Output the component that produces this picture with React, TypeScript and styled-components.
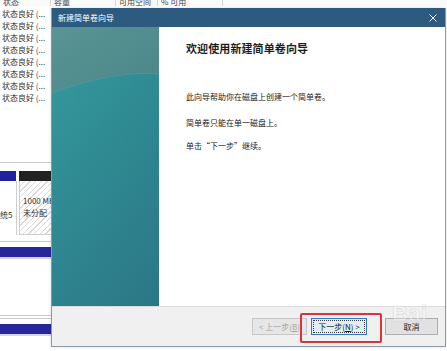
import React from "react";
import styled, { createGlobalStyle } from "styled-components";

const Global = createGlobalStyle`
  html, body { margin: 0; padding: 0; background: #ffffff; }
  body { font-family: "Noto Sans CJK SC", "Noto Sans", sans-serif; }
`;

const Screen = styled.div`
  position: relative;
  width: 447px;
  height: 351px;
  overflow: hidden;
  background: #ffffff;
  font-family: "Noto Sans CJK SC", "Noto Sans", sans-serif;
`;

/* ---------- background window (disk management) ---------- */
const BgWindow = styled.div`
  display: flex;
  flex-direction: column;
`;

const HeaderRow = styled.div`
  display: flex;
  height: 6px;
  background: #fafafa;
`;

const HeaderCell = styled.div<{ $w: number }>`
  width: ${(p) => p.$w}px;
  flex: none;
  height: 6px;
  overflow: hidden;
  display: flex;
  align-items: flex-end;
  border-right: 1px solid #d6d6d6;
  box-sizing: border-box;
  padding-left: 3px;
  font-size: 8px;
  line-height: 8px;
  color: #444;
`;

const HeaderText = styled.span`
  display: block;
  white-space: nowrap;
  line-height: 8px;
`;

const StatusList = styled.div`
  margin-top: 2px;
  width: 51px;
  display: flex;
  flex-direction: column;
`;

const StatusRow = styled.div`
  height: 12px;
  line-height: 12px;
  font-size: 8px;
  color: #333;
  padding-left: 2px;
  white-space: nowrap;
`;

const DiskArea = styled.div`
  width: 51px;
  margin-top: 58px;
  display: flex;
  flex-direction: column;
`;

const GreyLine = styled.div<{ $mt?: number }>`
  height: 1px;
  background: #c9c9c9;
  margin-top: ${(p) => p.$mt ?? 0}px;
`;

const BarRow = styled.div`
  display: flex;
  height: 10px;
  margin-top: 8px;
`;

const Bar = styled.div<{ $w: number; $c: string; $ml?: number }>`
  width: ${(p) => p.$w}px;
  flex: none;
  background: ${(p) => p.$c};
  margin-left: ${(p) => p.$ml ?? 0}px;
`;

const CellRow = styled.div`
  display: flex;
  height: 54px;
`;

const PlainCell = styled.div`
  width: 17px;
  flex: none;
  border-right: 1px solid #cfcfcf;
  box-sizing: border-box;
  display: flex;
  flex-direction: column;
  justify-content: flex-end;
  padding-bottom: 15px;
  overflow: hidden;
  font-size: 8px;
  line-height: 11px;
  color: #333;
`;

const HatchCell = styled.div`
  margin-left: 2px;
  flex: 1;
  border-left: 1px solid #cfcfcf;
  border-bottom: 1px solid #cfcfcf;
  background: repeating-linear-gradient(
    135deg,
    #ffffff 0px,
    #ffffff 3px,
    #d9d9d9 3px,
    #d9d9d9 4px
  );
  padding: 14px 0 0 3px;
  font-size: 8px;
  line-height: 12px;
  color: #333;
  white-space: nowrap;
  overflow: hidden;
`;

const VolumeBar = styled.div<{ $mt: number }>`
  margin-top: ${(p) => p.$mt}px;
  height: 10px;
  background: #27279b;
  border-bottom: 2px solid #d4d4ef;
`;

/* ---------- wizard dialog ---------- */
const Dialog = styled.div`
  position: absolute;
  left: 51px;
  top: 8px;
  width: 395px;
  height: 339px;
  box-sizing: border-box;
  border: 1px solid #8c9aa8;
  border-top: none;
  display: flex;
  flex-direction: column;
  background: #ffffff;
  box-shadow: 0 0 3px rgba(0, 0, 0, 0.15);
`;

const TitleBar = styled.div`
  height: 19px;
  flex: none;
  background: #2d5a7f;
  display: flex;
  align-items: center;
  justify-content: space-between;
  padding: 0 6px 0 6px;
  color: #ffffff;
  font-size: 8px;
`;

const TitleText = styled.span`
  letter-spacing: 0;
`;

const CloseIcon = styled.svg`
  width: 8px;
  height: 8px;
  margin-right: 2px;
`;

const Body = styled.div`
  flex: 1;
  display: flex;
`;

const SidePanel = styled.div`
  width: 107px;
  flex: none;
  background: linear-gradient(165deg, #33979b 0%, #2d8a90 45%, #2d818b 75%, #2c7a87 100%);
  overflow: hidden;
`;

const SideArt = styled.svg`
  display: block;
  width: 107px;
  height: 100%;
`;

const Content = styled.div`
  flex: 1;
  padding: 14px 10px 0 27px;
  display: flex;
  flex-direction: column;
`;

const Heading = styled.h1`
  margin: 0;
  font-size: 11px;
  line-height: 15px;
  font-weight: 700;
  color: #1e1e1e;
  letter-spacing: 0.1px;
`;

const Para = styled.p<{ $mt: number }>`
  margin: ${(p) => p.$mt}px 0 0 0;
  font-size: 8px;
  line-height: 11px;
  color: #222;
`;

const Footer = styled.div`
  height: 40px;
  flex: none;
  background: #f0f0f0;
  border-top: 1px solid #dcdcdc;
  display: flex;
  align-items: flex-start;
  justify-content: flex-end;
  padding: 11px 7px 0 0;
  box-sizing: border-box;
`;

const Button = styled.div<{ $w: number; $variant: "disabled" | "default" | "normal"; $ml?: number }>`
  width: ${(p) => p.$w}px;
  height: 17px;
  box-sizing: border-box;
  margin-left: ${(p) => p.$ml ?? 0}px;
  display: flex;
  align-items: center;
  justify-content: center;
  font-size: 8px;
  color: ${(p) => (p.$variant === "disabled" ? "#a3a3a3" : "#1a1a1a")};
  background: ${(p) =>
    p.$variant === "disabled" ? "#e6e6e6" : p.$variant === "default" ? "#e1ecf6" : "#e1e1e1"};
  border: 1px solid
    ${(p) => (p.$variant === "disabled" ? "#c6c6c6" : p.$variant === "default" ? "#2c7ad0" : "#adadad")};
  outline: ${(p) => (p.$variant === "default" ? "1px dotted #3a3a3a" : "none")};
  outline-offset: -3px;
`;

const Underline = styled.span`
  text-decoration: underline;
`;

const Highlight = styled.div`
  position: absolute;
  left: 300px;
  top: 313px;
  width: 82px;
  height: 30px;
  box-sizing: border-box;
  border: 2px solid #d9343c;
  border-radius: 2px;
`;

const Watermark = styled.div`
  position: absolute;
  left: 392px;
  top: 301px;
  font-family: "Liberation Sans", Arial, sans-serif;
  font-size: 22px;
  font-weight: 700;
  color: rgba(255, 255, 255, 0.35);
  -webkit-text-stroke: 0.6px rgba(200, 200, 200, 0.6);
  letter-spacing: 0.5px;
`;

const statusRows = Array.from({ length: 8 }, () => "状态良好 (...");

export default function App() {
  return (
    <>
      <Global />
      <Screen>
        <BgWindow>
          <HeaderRow>
            <HeaderCell $w={51}>
              <HeaderText>状态</HeaderText>
            </HeaderCell>
            <HeaderCell $w={65}>
              <HeaderText>容量</HeaderText>
            </HeaderCell>
            <HeaderCell $w={42}>
              <HeaderText>可用空间</HeaderText>
            </HeaderCell>
            <HeaderCell $w={65}>
              <HeaderText>% 可用</HeaderText>
            </HeaderCell>
          </HeaderRow>
          <StatusList>
            {statusRows.map((t, i) => (
              <StatusRow key={i}>{t}</StatusRow>
            ))}
          </StatusList>
          <DiskArea>
            <GreyLine />
            <BarRow>
              <Bar $w={16} $c="#2121a3" />
              <Bar $w={40} $c="#222222" $ml={3} />
            </BarRow>
            <CellRow>
              <PlainCell>统5</PlainCell>
              <HatchCell>
                1000 MB
                <br />
                未分配
              </HatchCell>
            </CellRow>
            <GreyLine $mt={6} />
            <VolumeBar $mt={5} />
            <GreyLine $mt={56} />
            <GreyLine $mt={2} />
            <VolumeBar $mt={5} />
          </DiskArea>
        </BgWindow>

        <Dialog>
          <TitleBar>
            <TitleText>新建简单卷向导</TitleText>
            <CloseIcon viewBox="0 0 8 8">
              <path d="M0.5 0.5 L7.5 7.5 M7.5 0.5 L0.5 7.5" stroke="#e8eef4" strokeWidth="1" />
            </CloseIcon>
          </TitleBar>
          <Body>
            <SidePanel>
              <SideArt viewBox="0 0 107 279" preserveAspectRatio="none">
                <defs>
                  <linearGradient id="topg" x1="0" y1="0" x2="1" y2="1">
                    <stop offset="0" stopColor="#5a9494" />
                    <stop offset="1" stopColor="#4a8689" />
                  </linearGradient>
                  <linearGradient id="glow" x1="0" y1="0" x2="1" y2="1">
                    <stop offset="0" stopColor="#38a0a3" stopOpacity="0.5" />
                    <stop offset="1" stopColor="#2a7284" stopOpacity="0.4" />
                  </linearGradient>
                </defs>
                <rect x="0" y="0" width="107" height="279" fill="url(#glow)" />
                <path d="M0 0 H107 V47 C80 44 35 52 0 66 Z" fill="url(#topg)" />
                <path d="M0 66 C35 52 80 44 107 47" stroke="#6aa5a2" strokeWidth="0.8" fill="none" opacity="0.5" />
              </SideArt>
            </SidePanel>
            <Content>
              <Heading>欢迎使用新建简单卷向导</Heading>
              <Para $mt={35}>此向导帮助你在磁盘上创建一个简单卷。</Para>
              <Para $mt={15}>简单卷只能在单一磁盘上。</Para>
              <Para $mt={12}>单击“下一步”继续。</Para>
            </Content>
          </Body>
          <Footer>
            <Button $w={55} $variant="disabled">
              &lt; 上一步(<Underline>B</Underline>)
            </Button>
            <Button $w={56} $variant="default" $ml={4}>
              下一步(<Underline>N</Underline>) &gt;
            </Button>
            <Button $w={53} $variant="normal" $ml={18}>
              取消
            </Button>
          </Footer>
        </Dialog>

        <Highlight />
        <Watermark>Bai</Watermark>
      </Screen>
    </>
  );
}
